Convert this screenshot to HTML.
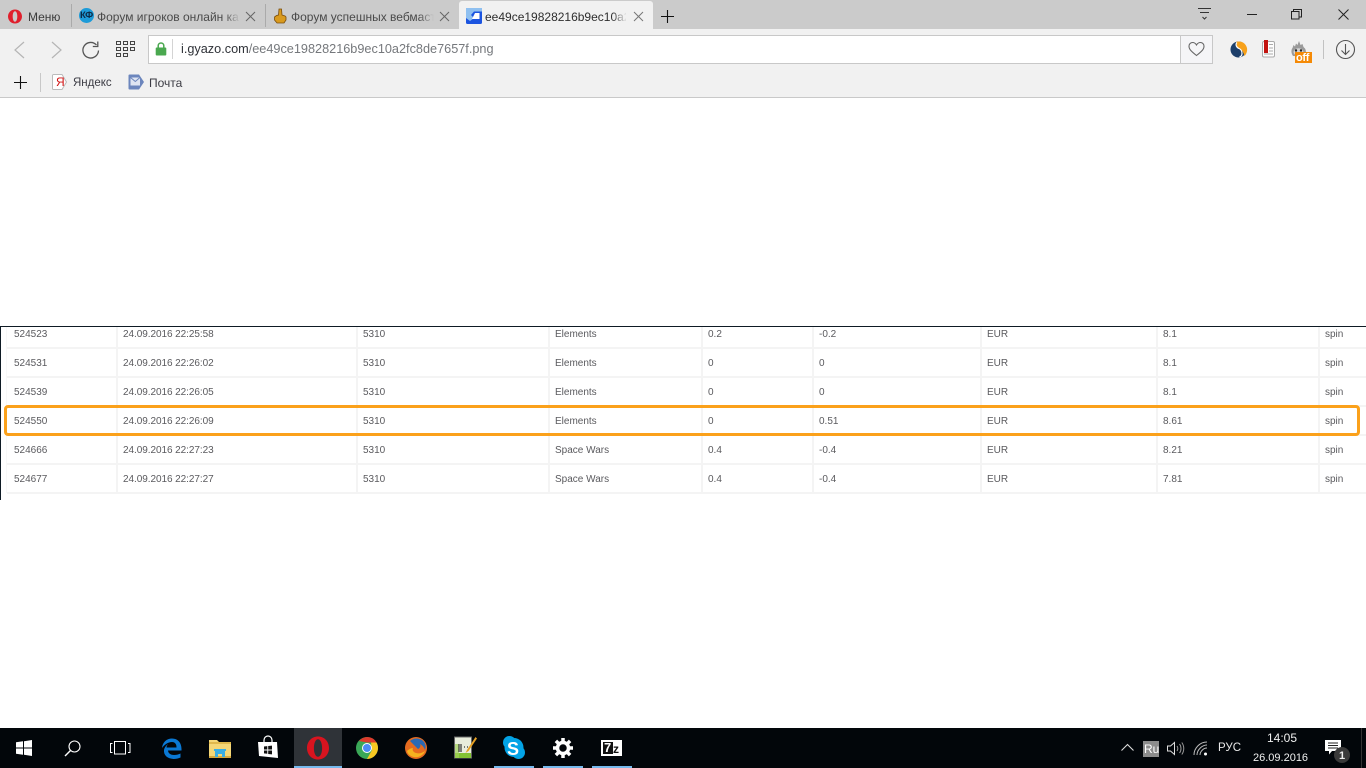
<!DOCTYPE html>
<html><head><meta charset="utf-8"><style>
html,body{margin:0;padding:0;width:1366px;height:768px;overflow:hidden;background:#fff;font-family:"Liberation Sans","Noto Sans CJK JP",sans-serif}
.a{position:absolute}
.t{position:absolute;white-space:nowrap;line-height:14px}
.cell{position:absolute;font-size:10px;color:#5a5a5e;white-space:nowrap;line-height:12px;filter:blur(.3px)}
.d{letter-spacing:-.06px}
.vl{position:absolute;background:#f4f4f4;width:2px;top:327px;height:166px}
.hl{position:absolute;background:#f4f4f4;height:2px;left:7px;width:1359px}
svg{position:absolute;overflow:visible}
</style></head><body>
<!-- tab strip -->
<div class="a" style="left:0;top:0;width:1366px;height:29px;background:#cbcbcb"></div>
<div class="a" style="left:459px;top:1px;width:194px;height:28px;background:#f1f1f1;border-radius:3px 3px 0 0"></div>
<div class="a" style="left:71px;top:4px;width:1px;height:23px;background:#aaa"></div>
<div class="a" style="left:265px;top:4px;width:1px;height:23px;background:#aaa"></div>
<!-- toolbar -->
<div class="a" style="left:0;top:29px;width:1366px;height:68px;background:#f1f1f1"></div>
<div class="a" style="left:0;top:97px;width:1366px;height:1px;background:#c9c9c9"></div>
<!-- opera logo -->
<svg style="left:8px;top:9px" width="14" height="15"><path fill-rule="evenodd" d="M7 .5C10.900 .5 14 3.600 14 7.500S10.900 14.500 7 14.500 0 11.400 0 7.500 3.100 .5 7 .5zM7 2.300C5.600 2.300 4.700 4.600 4.700 7.500S5.600 12.700 7 12.700 9.300 10.400 9.300 7.500 8.400 2.300 7 2.300z" fill="#e0202d"/></svg>
<div class="t" style="left:28px;top:10px;font-size:12px;color:#3c3c3c">Меню</div>
<!-- tab 1 -->
<div class="a" style="left:79px;top:8px;width:15px;height:15px;border-radius:50%;background:#1d9bd8"></div>
<div class="t" style="left:80px;top:9px;font-size:9.5px;font-weight:bold;color:#0d2a45;letter-spacing:-.5px">КФ</div>
<div class="t" style="left:97px;top:10px;width:143px;overflow:hidden;font-size:12px;color:#4a4a4a">Форум игроков онлайн ка</div>
<div class="a" style="left:225px;top:9px;width:15px;height:16px;background:linear-gradient(90deg,rgba(203,203,203,0),#cbcbcb)"></div>
<svg style="left:245px;top:11px" width="11" height="11"><path d="M1 1L10 10M10 1L1 10" stroke="#666" stroke-width="1"/></svg>
<!-- tab 2 -->
<svg style="left:273px;top:8px" width="15" height="16"><path d="M6 1h2.500l.5 6 3 1 1 1v3l-2 3H4l-2.500-3V9l2-1.500L5.500 7z" fill="#d99a1e" stroke="#7a4d0c" stroke-width=".8"/></svg>
<div class="t" style="left:291px;top:10px;width:143px;overflow:hidden;font-size:12px;color:#4a4a4a">Форум успешных вебмаст</div>
<div class="a" style="left:419px;top:9px;width:15px;height:16px;background:linear-gradient(90deg,rgba(203,203,203,0),#cbcbcb)"></div>
<svg style="left:439px;top:11px" width="11" height="11"><path d="M1 1L10 10M10 1L1 10" stroke="#666" stroke-width="1"/></svg>
<!-- tab 3 -->
<svg style="left:466px;top:8px" width="16" height="16"><rect width="16" height="16" rx="1.500" fill="#1b54e0"/><path d="M0 0h16v3.500H8L5 7l3 3-4 3-4-3z" fill="#8fc0f0"/><path d="M9 5h4.500v6H6z" fill="#fff"/></svg>
<div class="t" style="left:485px;top:10px;width:141px;overflow:hidden;font-size:12px;color:#2e2e2e">ee49ce19828216b9ec10a2f</div>
<div class="a" style="left:612px;top:9px;width:15px;height:16px;background:linear-gradient(90deg,rgba(241,241,241,0),#f1f1f1)"></div>
<svg style="left:633px;top:11px" width="11" height="11"><path d="M1 1L10 10M10 1L1 10" stroke="#777" stroke-width="1"/></svg>
<svg style="left:661px;top:10px" width="13" height="13"><path d="M6.500 0V13M0 6.500H13" stroke="#111" stroke-width="1.100"/></svg>
<!-- window controls -->
<svg style="left:1198px;top:8px" width="14" height="13"><path d="M0 .5H13M2 4.500H11" stroke="#333" stroke-width="1"/><path d="M4.500 9l2 2 2-2" fill="none" stroke="#333" stroke-width="1"/></svg>
<div class="a" style="left:1247px;top:14px;width:10px;height:1px;background:#222"></div>
<svg style="left:1291px;top:9px" width="11" height="11"><rect x=".5" y="2.500" width="7.500" height="7.500" fill="none" stroke="#222"/><path d="M2.500 2.500V.5H10.500V8H8" fill="none" stroke="#222"/></svg>
<svg style="left:1338px;top:9px" width="11" height="11"><path d="M.5.5L10.500 10.500M10.500.5L.5 10.500" stroke="#222" stroke-width="1"/></svg>
<!-- nav buttons -->
<svg style="left:13px;top:41px" width="12" height="18"><path d="M11 1L2 9l9 8" fill="none" stroke="#b5b5b5" stroke-width="1.200"/></svg>
<svg style="left:51px;top:41px" width="12" height="18"><path d="M1 1l9 8-9 8" fill="none" stroke="#b5b5b5" stroke-width="1.200"/></svg>
<svg style="left:81px;top:41px" width="19" height="18"><path d="M15.500 4A7.800 7.800 0 1 0 17.500 9.500" fill="none" stroke="#555" stroke-width="1.300"/><path d="M16.800 .5V5.500H11.800" fill="none" stroke="#555" stroke-width="1.300"/></svg>
<svg style="left:116px;top:41px" width="20" height="16" fill="none" stroke="#444" stroke-width="1"><rect x=".5" y=".5" width="4" height="3"/><rect x="7.500" y=".5" width="4" height="3"/><rect x="14.500" y=".5" width="4" height="3"/><rect x=".5" y="6.500" width="4" height="3"/><rect x="7.500" y="6.500" width="4" height="3"/><rect x="14.500" y="6.500" width="4" height="3"/><rect x=".5" y="12.500" width="4" height="3"/><rect x="7.500" y="12.500" width="4" height="3"/></svg>
<!-- address bar -->
<div class="a" style="left:148px;top:35px;width:1031px;height:26.500px;background:#fff;border:1px solid #c8c8c8"></div>
<div class="a" style="left:1180px;top:35px;width:31px;height:26.500px;background:#f5f5f7;border:1px solid #c8c8c8"></div>
<svg style="left:155px;top:42px" width="12" height="14"><path d="M3.200 6V3.800a2.800 2.800 0 0 1 5.600 0V6" fill="none" stroke="#4aa84f" stroke-width="1.500"/><rect x=".7" y="5.500" width="10.600" height="8" rx="1" fill="#4aa84f"/></svg>
<div class="a" style="left:172px;top:39px;width:1px;height:20px;background:#d4d4d4"></div>
<div class="t" style="left:181px;top:42px;font-size:12.700px;color:#75787c"><span style="color:#2f3238">i.gyazo.com</span>/ee49ce19828216b9ec10a2fc8de7657f.png</div>
<svg style="left:1188px;top:41px" width="17" height="16"><path d="M8.500 14.500C4 11 1 8.500 1 5.200 1 3 2.700 1.500 4.600 1.500c1.700 0 3 1 3.900 2.500.9-1.500 2.200-2.500 3.900-2.500C14.300 1.500 16 3 16 5.200c0 3.300-3 5.800-7.500 9.300z" fill="none" stroke="#666" stroke-width="1.100"/></svg>
<!-- extensions -->
<svg style="left:1230px;top:41px" width="18" height="17"><circle cx="8.500" cy="8.500" r="8" fill="#1d3f6a"/><path d="M6 1C9 0 15 0 17 7c.500 3-.5 6-2.500 8-1-3-1.500-5-4-6.500C8 7 6 5 6 1z" fill="#f7a11b"/><path d="M7 1.500c-2 2-.5 5 2 6s3 3.500 3 5-1 3-2.500 3.500" fill="none" stroke="#fff" stroke-width="1.200"/></svg>
<svg style="left:1262px;top:40px" width="14" height="18"><rect x=".5" y="1.500" width="12" height="15.500" rx="1.500" fill="#fdfdfd" stroke="#aaa"/><path d="M7 4.500h4M7 8h4M7 11h4M2 14h9" stroke="#aaa"/><rect x="2" y="0" width="4" height="13" fill="#c2130f"/></svg>
<svg style="left:1291px;top:41px" width="16" height="15"><path d="M2 15C0 12 0 9 1.500 7L2.500 4l1.500 1.500L5 2.500l1.500 1.500L8 0l1.500 4 2-1 1 3 1.500 1.500C15.500 10 15 13 13 15z" fill="#9a9a9a"/><ellipse cx="7.500" cy="11" rx="5" ry="3.800" fill="#d4d4d4"/><circle cx="5" cy="9.500" r="1.200" fill="#222"/><circle cx="10" cy="9.500" r="1.200" fill="#222"/></svg>
<div class="a" style="left:1295px;top:52px;width:17px;height:11px;background:#f58a06"></div>
<div class="t" style="left:1296px;top:51px;width:16px;font-size:11px;font-weight:bold;color:#fff;letter-spacing:-.3px">off</div>
<div class="a" style="left:1323px;top:40px;width:1px;height:19px;background:#c2c2c2"></div>
<svg style="left:1336px;top:40px" width="19" height="19"><circle cx="9.500" cy="9.500" r="9" fill="none" stroke="#555" stroke-width="1.100"/><path d="M9.500 4V14.500M5.500 10.500l4 4 4-4" fill="none" stroke="#555" stroke-width="1.100"/></svg>
<!-- bookmarks bar -->
<svg style="left:14px;top:76px" width="13" height="13"><path d="M6.500 0V13M0 6.500H13" stroke="#111" stroke-width="1.100"/></svg>
<div class="a" style="left:40px;top:73px;width:1px;height:19px;background:#c8c8c8"></div>
<svg style="left:52px;top:74px" width="16" height="16"><path d="M1.500.5H10l4.500 7.500-4.500 7.500H1.500a1 1 0 0 1-1-1V1.500a1 1 0 0 1 1-1z" fill="#fff" stroke="#bbb"/></svg>
<div class="t" style="left:56px;top:75px;font-size:12px;color:#d11414">Я</div>
<div class="t" style="left:73px;top:76px;font-size:11.500px;color:#3c3c44">Яндекс</div>
<svg style="left:128px;top:74px" width="17" height="16"><path d="M1.500 .5H11l5 7.500-5 7.500H1.500a1 1 0 0 1-1-1V1.500a1 1 0 0 1 1-1z" fill="#6c86bd"/><rect x="2.500" y="3.500" width="9.500" height="8" fill="#dfe5f2"/><path d="M2.500 3.500l4.800 4 4.700-4" fill="none" stroke="#6c86bd"/></svg>
<div class="t" style="left:149px;top:76px;font-size:12px;color:#3c3c44">Почта</div>

<!-- image -->
<div class="a" style="left:0;top:326px;width:1366px;height:1px;background:#0e1a24"></div>
<div class="a" style="left:0;top:326px;width:1px;height:174px;background:#0e1a24"></div>
<div class="hl" style="top:347px"></div><div class="hl" style="top:376px"></div><div class="hl" style="top:405px"></div><div class="hl" style="top:434px"></div><div class="hl" style="top:463px"></div><div class="hl" style="top:492px"></div>
<div class="vl" style="left:6px;width:1px;background:#f8f8f8"></div>
<div class="vl" style="left:116px"></div><div class="vl" style="left:356px"></div><div class="vl" style="left:548px"></div><div class="vl" style="left:701px"></div><div class="vl" style="left:812px"></div><div class="vl" style="left:980px"></div><div class="vl" style="left:1156px"></div><div class="vl" style="left:1318px"></div>

<div class="cell" style="left:14px;top:329px">524523</div><div class="cell d" style="left:123px;top:329px">24.09.2016 22:25:58</div><div class="cell" style="left:363px;top:329px">5310</div><div class="cell" style="left:555px;top:329px">Elements</div><div class="cell" style="left:708px;top:329px">0.2</div><div class="cell" style="left:819px;top:329px">-0.2</div><div class="cell" style="left:987px;top:329px">EUR</div><div class="cell" style="left:1163px;top:329px">8.1</div><div class="cell" style="left:1325px;top:329px">spin</div>
<div class="cell" style="left:14px;top:358px">524531</div><div class="cell d" style="left:123px;top:358px">24.09.2016 22:26:02</div><div class="cell" style="left:363px;top:358px">5310</div><div class="cell" style="left:555px;top:358px">Elements</div><div class="cell" style="left:708px;top:358px">0</div><div class="cell" style="left:819px;top:358px">0</div><div class="cell" style="left:987px;top:358px">EUR</div><div class="cell" style="left:1163px;top:358px">8.1</div><div class="cell" style="left:1325px;top:358px">spin</div>
<div class="cell" style="left:14px;top:387px">524539</div><div class="cell d" style="left:123px;top:387px">24.09.2016 22:26:05</div><div class="cell" style="left:363px;top:387px">5310</div><div class="cell" style="left:555px;top:387px">Elements</div><div class="cell" style="left:708px;top:387px">0</div><div class="cell" style="left:819px;top:387px">0</div><div class="cell" style="left:987px;top:387px">EUR</div><div class="cell" style="left:1163px;top:387px">8.1</div><div class="cell" style="left:1325px;top:387px">spin</div>
<div class="cell" style="left:14px;top:416px">524550</div><div class="cell d" style="left:123px;top:416px">24.09.2016 22:26:09</div><div class="cell" style="left:363px;top:416px">5310</div><div class="cell" style="left:555px;top:416px">Elements</div><div class="cell" style="left:708px;top:416px">0</div><div class="cell" style="left:819px;top:416px">0.51</div><div class="cell" style="left:987px;top:416px">EUR</div><div class="cell" style="left:1163px;top:416px">8.61</div><div class="cell" style="left:1325px;top:416px">spin</div>
<div class="cell" style="left:14px;top:445px">524666</div><div class="cell d" style="left:123px;top:445px">24.09.2016 22:27:23</div><div class="cell" style="left:363px;top:445px">5310</div><div class="cell" style="left:555px;top:445px">Space Wars</div><div class="cell" style="left:708px;top:445px">0.4</div><div class="cell" style="left:819px;top:445px">-0.4</div><div class="cell" style="left:987px;top:445px">EUR</div><div class="cell" style="left:1163px;top:445px">8.21</div><div class="cell" style="left:1325px;top:445px">spin</div>
<div class="cell" style="left:14px;top:474px">524677</div><div class="cell d" style="left:123px;top:474px">24.09.2016 22:27:27</div><div class="cell" style="left:363px;top:474px">5310</div><div class="cell" style="left:555px;top:474px">Space Wars</div><div class="cell" style="left:708px;top:474px">0.4</div><div class="cell" style="left:819px;top:474px">-0.4</div><div class="cell" style="left:987px;top:474px">EUR</div><div class="cell" style="left:1163px;top:474px">7.81</div><div class="cell" style="left:1325px;top:474px">spin</div>

<!-- orange highlight -->
<div class="a" style="left:4px;top:405px;width:1350px;height:25px;border:3px solid #fba11b;border-radius:4px"></div>

<!-- taskbar -->
<div class="a" style="left:0;top:728px;width:1366px;height:40px;background:#02060a"></div>
<div class="a" style="left:294px;top:728px;width:48px;height:40px;background:#2f3338"></div>
<div class="a" style="left:294px;top:766px;width:48px;height:2px;background:#76b9ed"></div>
<div class="a" style="left:494px;top:766px;width:40px;height:2px;background:#76b9ed"></div>
<div class="a" style="left:543px;top:766px;width:40px;height:2px;background:#76b9ed"></div>
<div class="a" style="left:592px;top:766px;width:40px;height:2px;background:#76b9ed"></div>
<svg style="left:16px;top:740px" width="16" height="16"><path d="M0 2.300L7 1.300V7.500H0zM8 1.200L16 0V7.500H8zM0 8.500H7V14.700L0 13.700zM8 8.500H16V16L8 14.800z" fill="#fff"/></svg>
<svg style="left:64px;top:740px" width="17" height="17"><circle cx="10.500" cy="6.500" r="5.500" fill="none" stroke="#fff" stroke-width="1.100"/><path d="M6.500 10.500L1 16" stroke="#fff" stroke-width="1.400"/></svg>
<svg style="left:110px;top:741px" width="21" height="14" fill="none" stroke="#fff" stroke-width="1"><rect x="4.500" y=".5" width="11" height="12.500"/><path d="M2.500 2.500H.5V11.500H2.500M18 2.500H20V11.500H18"/></svg>
<!-- edge -->
<svg style="left:161px;top:738px" width="21" height="20"><path d="M1 10C1.500 4 6 .5 11 .5c6 0 9.500 4.500 9.500 10.500v1.500H7c.2 3 3 4.500 6 4.500 2.500 0 4.500-.5 6.500-1.500v4c-2 1-4.500 1.500-7 1.500C6 20.500 2.500 17 3 12c.5-2 1-3.500 4-6-1 1.500-1.500 2.500-1.500 3.500h10C15.500 6 14 4 11 4 7 4 3.500 6.500 1 10z" fill="#0a78d4"/></svg>
<!-- folder -->
<svg style="left:209px;top:739px" width="22" height="19"><path d="M0 1h8l2 2h12v15H0z" fill="#f5d777"/><rect y="3" width="22" height="2" fill="#e0b84c"/><rect y="17" width="22" height="2" fill="#d6a93e"/><path d="M6 18v-6h10v6h-3v-3H9v3z" fill="#3aaee4"/><rect x="5" y="10" width="12" height="2" fill="#3aaee4"/></svg>
<!-- store -->
<svg style="left:258px;top:736px" width="20" height="22"><path d="M6 6V4a4 4 0 0 1 8 0v2" fill="none" stroke="#fff" stroke-width="1.200"/><path d="M0 6H19L20 22 1 20z" fill="#fff"/><path d="M6 10.500l3.300-.4v3.400H6zM10.200 10l3.800-.4v3.900h-3.800zM6 14.500h3.300v3.300L6 17.400zM10.200 14.500H14v3.900l-3.800-.4z" fill="#111"/></svg>
<!-- opera -->
<svg style="left:306px;top:736px" width="24" height="24"><path fill-rule="evenodd" d="M12 .5C18.400 .5 23 5.500 23 12S18.400 23.500 12 23.500 1 18.500 1 12 5.600 .5 12 .5zM12 3.200C9.600 3.200 7.900 7 7.900 12S9.600 20.800 12 20.800 16.100 17 16.100 12 14.400 3.200 12 3.200z" fill="#d8141f"/></svg>
<!-- chrome -->
<svg style="left:356px;top:737px" width="22" height="22"><circle cx="11" cy="11" r="11" fill="#3aa757"/><path d="M11 0A11 11 0 0 1 20.500 5.500H11L3 4A11 11 0 0 1 11 0zM3 4L7.500 11 3 4z" fill="#dd3a2c"/><path d="M20.500 5.500A11 11 0 0 1 11 22l5-9-1-7.500z" fill="#f8c822"/><circle cx="11" cy="11" r="5" fill="#fff"/><circle cx="11" cy="11" r="4" fill="#4c8bf5"/></svg>
<!-- firefox -->
<svg style="left:405px;top:737px" width="22" height="22"><circle cx="11" cy="11" r="11" fill="#e66b1f"/><path d="M5 4C8 1 15 0 19 5c2 3 2 5 1 8-1-3-3-5-5-6 1 2 0 4-2 5z" fill="#2a6ab5"/><path d="M2 14c1 5 7 7 11 6 3-1 6-3 7-6-3 2-6 3-9 2-3-1-4-3-3-5-2 0-4 1-6 3z" fill="#f5b21f"/></svg>
<!-- notepad -->
<svg style="left:454px;top:736px" width="23" height="24"><rect x=".5" y="1" width="17" height="21" fill="#e8eddc" stroke="#666"/><rect x="1" y="17" width="16" height="5" fill="#83c332"/><rect x="1" y="8" width="4" height="14" fill="#a3d15a" opacity=".7"/><path d="M5 8V16M7 8V16M10 11H11M13 11H14" stroke="#333" stroke-width="1.200"/><path d="M21.500 1L13 14l-1.500 3 3-2L23 2.500z" fill="#e6a024"/></svg>
<!-- skype -->
<svg style="left:503px;top:736px" width="22" height="23"><circle cx="6.500" cy="6.500" r="6.500" fill="#03a3e6"/><circle cx="15.500" cy="16.500" r="6.500" fill="#03a3e6"/><circle cx="11" cy="11.500" r="9.500" fill="#03a3e6"/></svg>
<div class="t" style="left:507px;top:740px;font-size:18px;line-height:18px;font-weight:bold;color:#fff">S</div>
<!-- gear -->
<svg style="left:553px;top:738px" width="20" height="20"><circle cx="10" cy="10" r="5.500" fill="none" stroke="#fff" stroke-width="3.500"/><g stroke="#fff" stroke-width="3.500"><path d="M10 0V4M10 16V20M0 10H4M16 10H20M2.900 2.900L5.800 5.800M14.200 14.200L17.100 17.100M2.900 17.100L5.800 14.200M14.200 5.800L17.100 2.900"/></g></svg>
<!-- 7z -->
<div class="a" style="left:601px;top:740px;width:21px;height:16px;background:#fff"></div>
<div class="a" style="left:603px;top:742px;width:10px;height:12px;background:#111"></div>
<div class="t" style="left:604px;top:741px;font-size:13px;font-weight:bold;color:#fff">7</div>
<div class="t" style="left:613px;top:742px;font-size:12px;font-weight:bold;color:#111">z</div>
<!-- tray -->
<svg style="left:1121px;top:743px" width="13" height="9"><path d="M.5 7.500L6.500 1.500l6 6" fill="none" stroke="#ddd" stroke-width="1.100"/></svg>
<div class="a" style="left:1143px;top:741px;width:16px;height:16px;background:#8c8c8c"></div>
<div class="t" style="left:1144px;top:742px;font-size:12px;color:#fff">Ru</div>
<svg style="left:1167px;top:741px" width="17" height="15" fill="none" stroke="#ddd" stroke-width="1"><path d="M.5 5H3.500L7.500 1.500V13.500L3.500 10H.5z"/><path d="M10 5c1 1.500 1 3.500 0 5M12.500 3c2 2.500 2 6.500 0 9M14.800 1.500c2.600 3.500 2.600 8.500 0 12" stroke="#999"/></svg>
<svg style="left:1193px;top:741px" width="15" height="15" fill="none" stroke="#bbb" stroke-width="1"><path d="M1 14C1 7 7 1 14 1M4 14C4 9 9 4 14 4M7 14c0-3 3-7 7-7"/><circle cx="12.500" cy="13" r="1.500" fill="#fff" stroke="none"/></svg>
<div class="t" style="left:1218px;top:741px;font-size:11.500px;color:#e8e8e8">РУС</div>
<div class="t" style="left:1267px;top:731px;font-size:12px;color:#f0f0f0">14:05</div>
<div class="t" style="left:1253px;top:751px;font-size:11px;color:#f0f0f0">26.09.2016</div>
<svg style="left:1325px;top:740px" width="16" height="15"><path d="M0 0H16V11H7l-3 3.500V11H0z" fill="#fff"/><path d="M3 3H13M3 5.500H13M3 8H13" stroke="#222"/></svg>
<div class="a" style="left:1334px;top:747px;width:16px;height:16px;border-radius:50%;background:#3a3a3a"></div>
<div class="t" style="left:1339px;top:749px;font-size:11px;font-weight:bold;color:#eee">1</div>
<div class="a" style="left:1361px;top:728px;width:1px;height:40px;background:#333"></div>
</body></html>
